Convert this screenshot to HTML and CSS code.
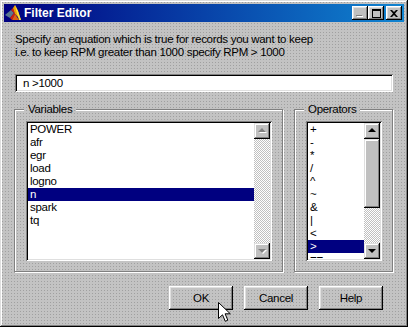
FILE: index.html
```html
<!DOCTYPE html>
<html lang="en">

<head>
    <meta charset="UTF-8">
    <title>Filter Editor</title>
    <link rel="stylesheet" href="styles.css">
</head>

<body>
    <div class="window tex">

        <!-- Title bar -->
        <div class="titlebar">
            <svg class="app-icon" width="16" height="16" viewBox="0 0 16 16">
                <polygon points="0,10 6,5 9,8 5,13" fill="#5a7890" />
                <polygon points="5,13 9,8 6,5 8,3 10,9 7,15" fill="#d02010" />
                <polygon points="8,3 10,0 13,6 16,15 10,9" fill="#f0a000" />
                <polygon points="10,0 13,6 16,15 14,15 11,5" fill="#f8e040" />
                <polygon points="7,15 10,9 14,15" fill="#e06010" />
            </svg>
            <span class="title">Filter Editor</span>
            <div class="controls">
                <button class="tb">
                    <svg width="8" height="8" viewBox="0 0 8 8">
                        <rect x="1" y="7" width="6" height="1" fill="#fff" />
                        <rect x="0" y="6" width="6" height="1" fill="#808080" />
                    </svg>
                </button>
                <button class="tb">
                    <svg width="9" height="9" viewBox="0 0 9 9">
                        <rect x="0.5" y="1.5" width="8" height="7" fill="none" stroke="#000" />
                        <rect x="0" y="0" width="9" height="2" fill="#000" />
                    </svg>
                </button>
                <button class="tb close">
                    <svg width="8" height="7" viewBox="0 0 8 7">
                        <path d="M0 0h2l2 2 2-2h2L5 3.5 8 7H6L4 5 2 7H0l3-3.5z" fill="#000" />
                    </svg>
                </button>
            </div>
        </div>

        <div class="content">
            <p class="prompt">Specify an equation which is true for records you want to keep<br>i.e. to keep RPM greater than 1000 specify RPM &gt; 1000</p>

            <div class="entry">n &gt;1000</div>

            <div class="groups">
                <!-- Variables -->
                <div class="group vars">
                    <span class="legend tex">Variables</span>
                    <div class="list">
                        <div class="items">
                            <div class="item">POWER</div>
                            <div class="item">afr</div>
                            <div class="item">egr</div>
                            <div class="item">load</div>
                            <div class="item">logno</div>
                            <div class="item sel">n</div>
                            <div class="item">spark</div>
                            <div class="item">tq</div>
                        </div>
                        <div class="scrollbar">
                            <div class="arrow off up"></div>
                            <div class="track"></div>
                            <div class="arrow off down"></div>
                        </div>
                    </div>
                </div>

                <!-- Operators -->
                <div class="group ops">
                    <span class="legend tex">Operators</span>
                    <div class="list">
                        <div class="items">
                            <div class="item">+</div>
                            <div class="item">-</div>
                            <div class="item">*</div>
                            <div class="item">/</div>
                            <div class="item">^</div>
                            <div class="item">~</div>
                            <div class="item">&amp;</div>
                            <div class="item">|</div>
                            <div class="item">&lt;</div>
                            <div class="item sel">&gt;</div>
                            <div class="item">==</div>
                        </div>
                        <div class="scrollbar">
                            <div class="arrow up"></div>
                            <div class="thumb"></div>
                            <div class="track"></div>
                            <div class="arrow down"></div>
                        </div>
                    </div>
                </div>
            </div>

            <div class="actions">
                <button class="btn tex">OK</button>
                <button class="btn tex">Cancel</button>
                <button class="btn tex">Help</button>
            </div>
        </div>

        <!-- mouse pointer over OK -->
        <svg class="cursor" width="13" height="20" viewBox="0 0 13 20">
            <path d="M0.5 0.5V16.5L4.5 12.8L7.3 19.3L9.8 18.2L7.1 11.8H12.3Z" fill="#fff" stroke="#000" stroke-width="1" />
        </svg>
    </div>
</body>

</html>
```

FILE: styles.css
```css
* {
    box-sizing: border-box;
}

body {
    margin: 0;
    font-family: "Liberation Sans", Arial, sans-serif;
    font-size: 11.5px;
    letter-spacing: -0.3px;
    color: #000;
}

/* dotted dialog texture */
.tex {
    background-color: #c3c3c3;
    background-image:
        linear-gradient(to right, #c3c3c3 2px, transparent 2px),
        linear-gradient(#c3c3c3 2px, #a0a0a0 2px);
    background-size: 3px 3px;
    background-attachment: fixed;
}

.window {
    width: 408px;
    height: 327px;
    padding: 4px;
    position: relative;
    display: flex;
    flex-direction: column;
    box-shadow: inset -1px -1px #000, inset 1px 1px #dfdfdf,
        inset -2px -2px #808080, inset 2px 2px #fff;
}

.titlebar {
    height: 18px;
    display: flex;
    align-items: center;
    padding-left: 1px;
    background: linear-gradient(90deg, #000080, #1084d0);
    color: #fff;
}

.app-icon {
    margin-right: 3px;
}

.title {
    flex: 1;
    font-weight: bold;
    font-size: 12px;
    letter-spacing: 0;
}

.controls {
    display: flex;
    margin-right: 2px;
}

.tb {
    width: 16px;
    height: 14px;
    border: 0;
    padding: 0;
    display: flex;
    align-items: center;
    justify-content: center;
    background: #c0c0c0;
    box-shadow: inset -1px -1px #000, inset 1px 1px #fff,
        inset -2px -2px #808080, inset 2px 2px #dfdfdf;
}

.tb.close {
    margin-left: 2px;
}

.content {
    flex: 1;
    display: flex;
    flex-direction: column;
    padding: 11px 11px 0 10px;
}

.prompt {
    margin: 0;
    padding-left: 1px;
    line-height: 13px;
}

.entry {
    height: 18px;
    margin: 15px 0 0 1px;
    padding-left: 8px;
    line-height: 18px;
    background: #fff;
    box-shadow: inset 1px 1px #808080, inset -1px -1px #fff,
        inset 2px 2px #000, inset -2px -2px #dfdfdf;
}

.groups {
    display: flex;
    gap: 11px;
    margin-top: 17px;
}

.group {
    height: 163px;
    display: flex;
    flex-direction: column;
    padding: 0 10px 0 11px;
    border: 1px solid #808080;
    box-shadow: 1px 1px #fff, inset 1px 1px #fff;
}

.vars {
    width: 269px;
}

.ops {
    width: 99px;
}

.legend {
    align-self: flex-start;
    margin: -7px 0 0 -2px;
    padding: 0 4px;
    line-height: 13px;
}

.list {
    height: 140px;
    margin-top: 5px;
    padding: 2px;
    display: flex;
    background: #fff;
    box-shadow: inset 1px 1px #808080, inset -1px -1px #fff,
        inset 2px 2px #000, inset -2px -2px #dfdfdf;
}

.items {
    flex: 1;
    overflow: hidden;
}

.item {
    height: 13px;
    line-height: 13px;
    padding-left: 2px;
    white-space: nowrap;
}

.item.sel {
    background: #000080;
    color: #fff;
}

.scrollbar {
    width: 16px;
    display: flex;
    flex-direction: column;
}

.track {
    flex: 1;
    background-color: #fff;
    background-image: conic-gradient(#c0c0c0 25%, #fff 0 50%, #c0c0c0 0 75%, #fff 0);
    background-size: 2px 2px;
}

.arrow,
.thumb {
    background: #c0c0c0;
    box-shadow: inset -1px -1px #000, inset 1px 1px #dfdfdf,
        inset -2px -2px #808080, inset 2px 2px #fff;
}

.arrow {
    height: 16px;
    position: relative;
}

.thumb {
    height: 69px;
}

/* arrow glyphs drawn on the button face */
.arrow::after {
    content: "";
    position: absolute;
    left: 4px;
    width: 0;
    height: 0;
    border-left: 4px solid transparent;
    border-right: 4px solid transparent;
}

.arrow.up::after {
    top: 5px;
    border-bottom: 4px solid #000;
}

.arrow.down::after {
    top: 6px;
    border-top: 4px solid #000;
}

.arrow.off.up::after {
    border-bottom-color: #808080;
    filter: drop-shadow(1px 1px 0 #fff);
}

.arrow.off.down::after {
    border-top-color: #808080;
    filter: drop-shadow(1px 1px 0 #fff);
}

.actions {
    display: flex;
    justify-content: flex-end;
    gap: 11px;
    margin-top: 14px;
    padding-right: 10px;
}

.btn {
    width: 64px;
    height: 24px;
    border: 0;
    padding: 0;
    font-family: "Liberation Sans", Arial, sans-serif;
    font-size: 11.5px;
    letter-spacing: -0.3px;
    color: #000;
    box-shadow: inset -1px -1px #000, inset 1px 1px #fff,
        inset -2px -2px #808080, inset 2px 2px #dfdfdf;
}

.cursor {
    position: absolute;
    left: 218px;
    top: 302px;
}
```
